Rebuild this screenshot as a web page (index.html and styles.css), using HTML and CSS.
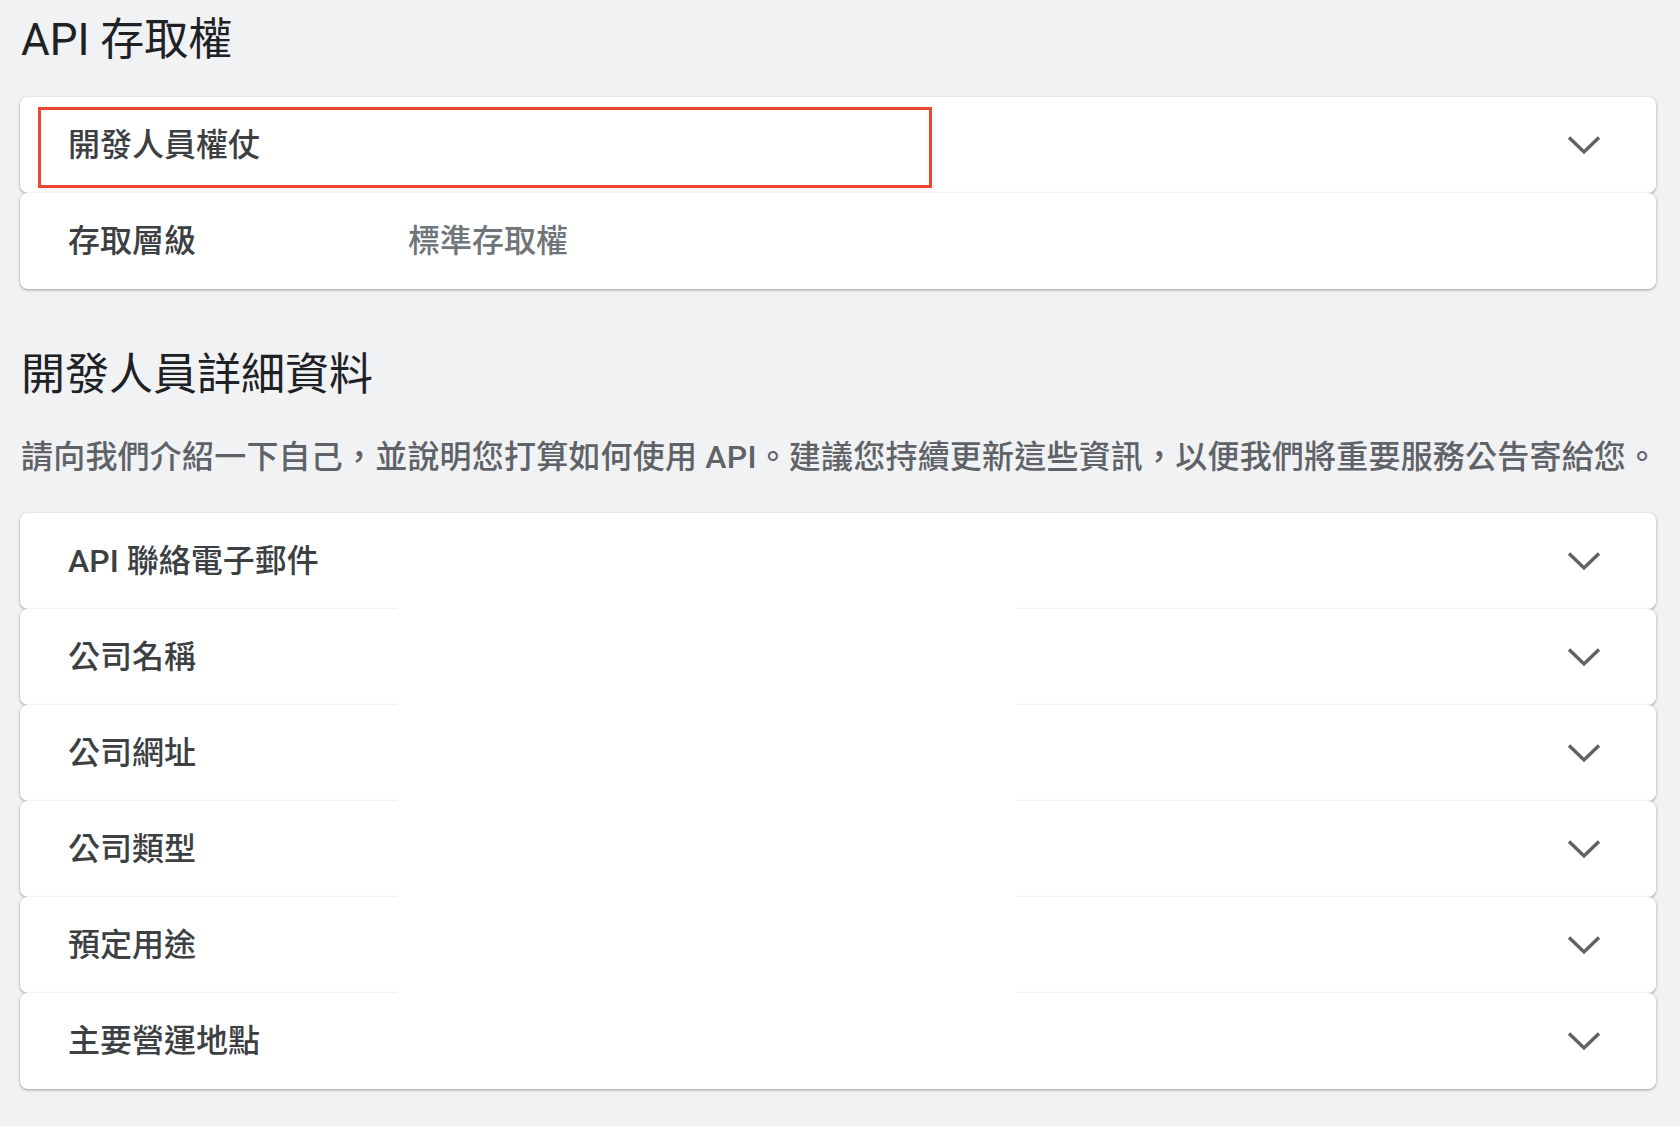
FILE: index.html
```html
<!DOCTYPE html>
<html lang="zh-Hant">
<head>
<meta charset="utf-8">
<title>API 存取權</title>
<link rel="stylesheet" href="styles.css">
</head>
<body>
<main class="page">
  <h1 class="section-title">API 存取權</h1>
  <div class="panel-group">
    <div class="panel-row">
      <span class="row-label">開發人員權仗</span>
      <svg class="chevron" width="34" height="20" viewBox="0 0 34 20"><polyline points="2,2.5 17,17 32,2.5" fill="none" stroke="#5f6368" stroke-width="3.4"/></svg>
      <div class="highlight-box"></div>
    </div>
    <div class="panel-row">
      <span class="row-label">存取層級</span>
      <span class="row-value">標準存取權</span>
    </div>
  </div>

  <h2 class="section-title second">開發人員詳細資料</h2>
  <p class="description">請向我們介紹一下自己，並說明您打算如何使用 API。建議您持續更新這些資訊，以便我們將重要服務公告寄給您。</p>

  <div class="panel-group details">
    <div class="panel-row">
      <span class="row-label">API 聯絡電子郵件</span>
      <svg class="chevron" width="34" height="20" viewBox="0 0 34 20"><polyline points="2,2.5 17,17 32,2.5" fill="none" stroke="#5f6368" stroke-width="3.4"/></svg>
    </div>
    <div class="panel-row">
      <span class="row-label">公司名稱</span>
      <svg class="chevron" width="34" height="20" viewBox="0 0 34 20"><polyline points="2,2.5 17,17 32,2.5" fill="none" stroke="#5f6368" stroke-width="3.4"/></svg>
    </div>
    <div class="panel-row">
      <span class="row-label">公司網址</span>
      <svg class="chevron" width="34" height="20" viewBox="0 0 34 20"><polyline points="2,2.5 17,17 32,2.5" fill="none" stroke="#5f6368" stroke-width="3.4"/></svg>
    </div>
    <div class="panel-row">
      <span class="row-label">公司類型</span>
      <svg class="chevron" width="34" height="20" viewBox="0 0 34 20"><polyline points="2,2.5 17,17 32,2.5" fill="none" stroke="#5f6368" stroke-width="3.4"/></svg>
    </div>
    <div class="panel-row">
      <span class="row-label">預定用途</span>
      <svg class="chevron" width="34" height="20" viewBox="0 0 34 20"><polyline points="2,2.5 17,17 32,2.5" fill="none" stroke="#5f6368" stroke-width="3.4"/></svg>
    </div>
    <div class="panel-row">
      <span class="row-label">主要營運地點</span>
      <svg class="chevron" width="34" height="20" viewBox="0 0 34 20"><polyline points="2,2.5 17,17 32,2.5" fill="none" stroke="#5f6368" stroke-width="3.4"/></svg>
    </div>
    <div class="seam-cover"></div>
  </div>
</main>
</body>
</html>
```
FILE: styles.css
```css
html, body {
  margin: 0;
  padding: 0;
  background: #f1f2f4;
}

body {
  font-family: Roboto, "Noto Sans CJK TC", "Noto Sans", sans-serif;
  color: #202124;
}

.page {
  padding: 12px 24px 36px 20px;
}

.section-title {
  margin: 0;
  padding-left: 1px;
  font-size: 44px;
  line-height: 56px;
  font-weight: 400;
  color: #202124;
}

.section-title.second {
  margin-top: 58px;
}

.panel-group {
  margin-top: 29px;
  position: relative;
}

.panel-group.details {
  margin-top: 32px;
}

.panel-row {
  position: relative;
  display: flex;
  align-items: center;
  height: 96px;
  padding: 0 55px 0 48px;
  background: #ffffff;
  border-radius: 8px;
  box-shadow: 0 1px 2px rgba(60, 64, 67, 0.3), 0 1px 3px 1px rgba(60, 64, 67, 0.15);
}

.row-label {
  width: 340px;
  flex: none;
  font-size: 32px;
  font-weight: 500;
  color: #3c4043;
  line-height: 40px;
}

.row-value {
  font-size: 32px;
  font-weight: 500;
  color: #70757a;
  line-height: 40px;
}

.chevron {
  margin-left: auto;
  display: block;
  flex: none;
}

.highlight-box {
  position: absolute;
  left: 18px;
  top: 10px;
  width: 894px;
  height: 81px;
  box-sizing: border-box;
  border: 3px solid #ea4630;
}

.description {
  margin: 30px 0 0 0;
  padding-left: 1px;
  font-size: 32px;
  line-height: 48px;
  font-weight: 500;
  letter-spacing: 0.2px;
  color: #5f6368;
  white-space: nowrap;
}

.seam-cover {
  position: absolute;
  left: 377px;
  top: 88px;
  width: 619px;
  height: 398px;
  background: #ffffff;
}
```
